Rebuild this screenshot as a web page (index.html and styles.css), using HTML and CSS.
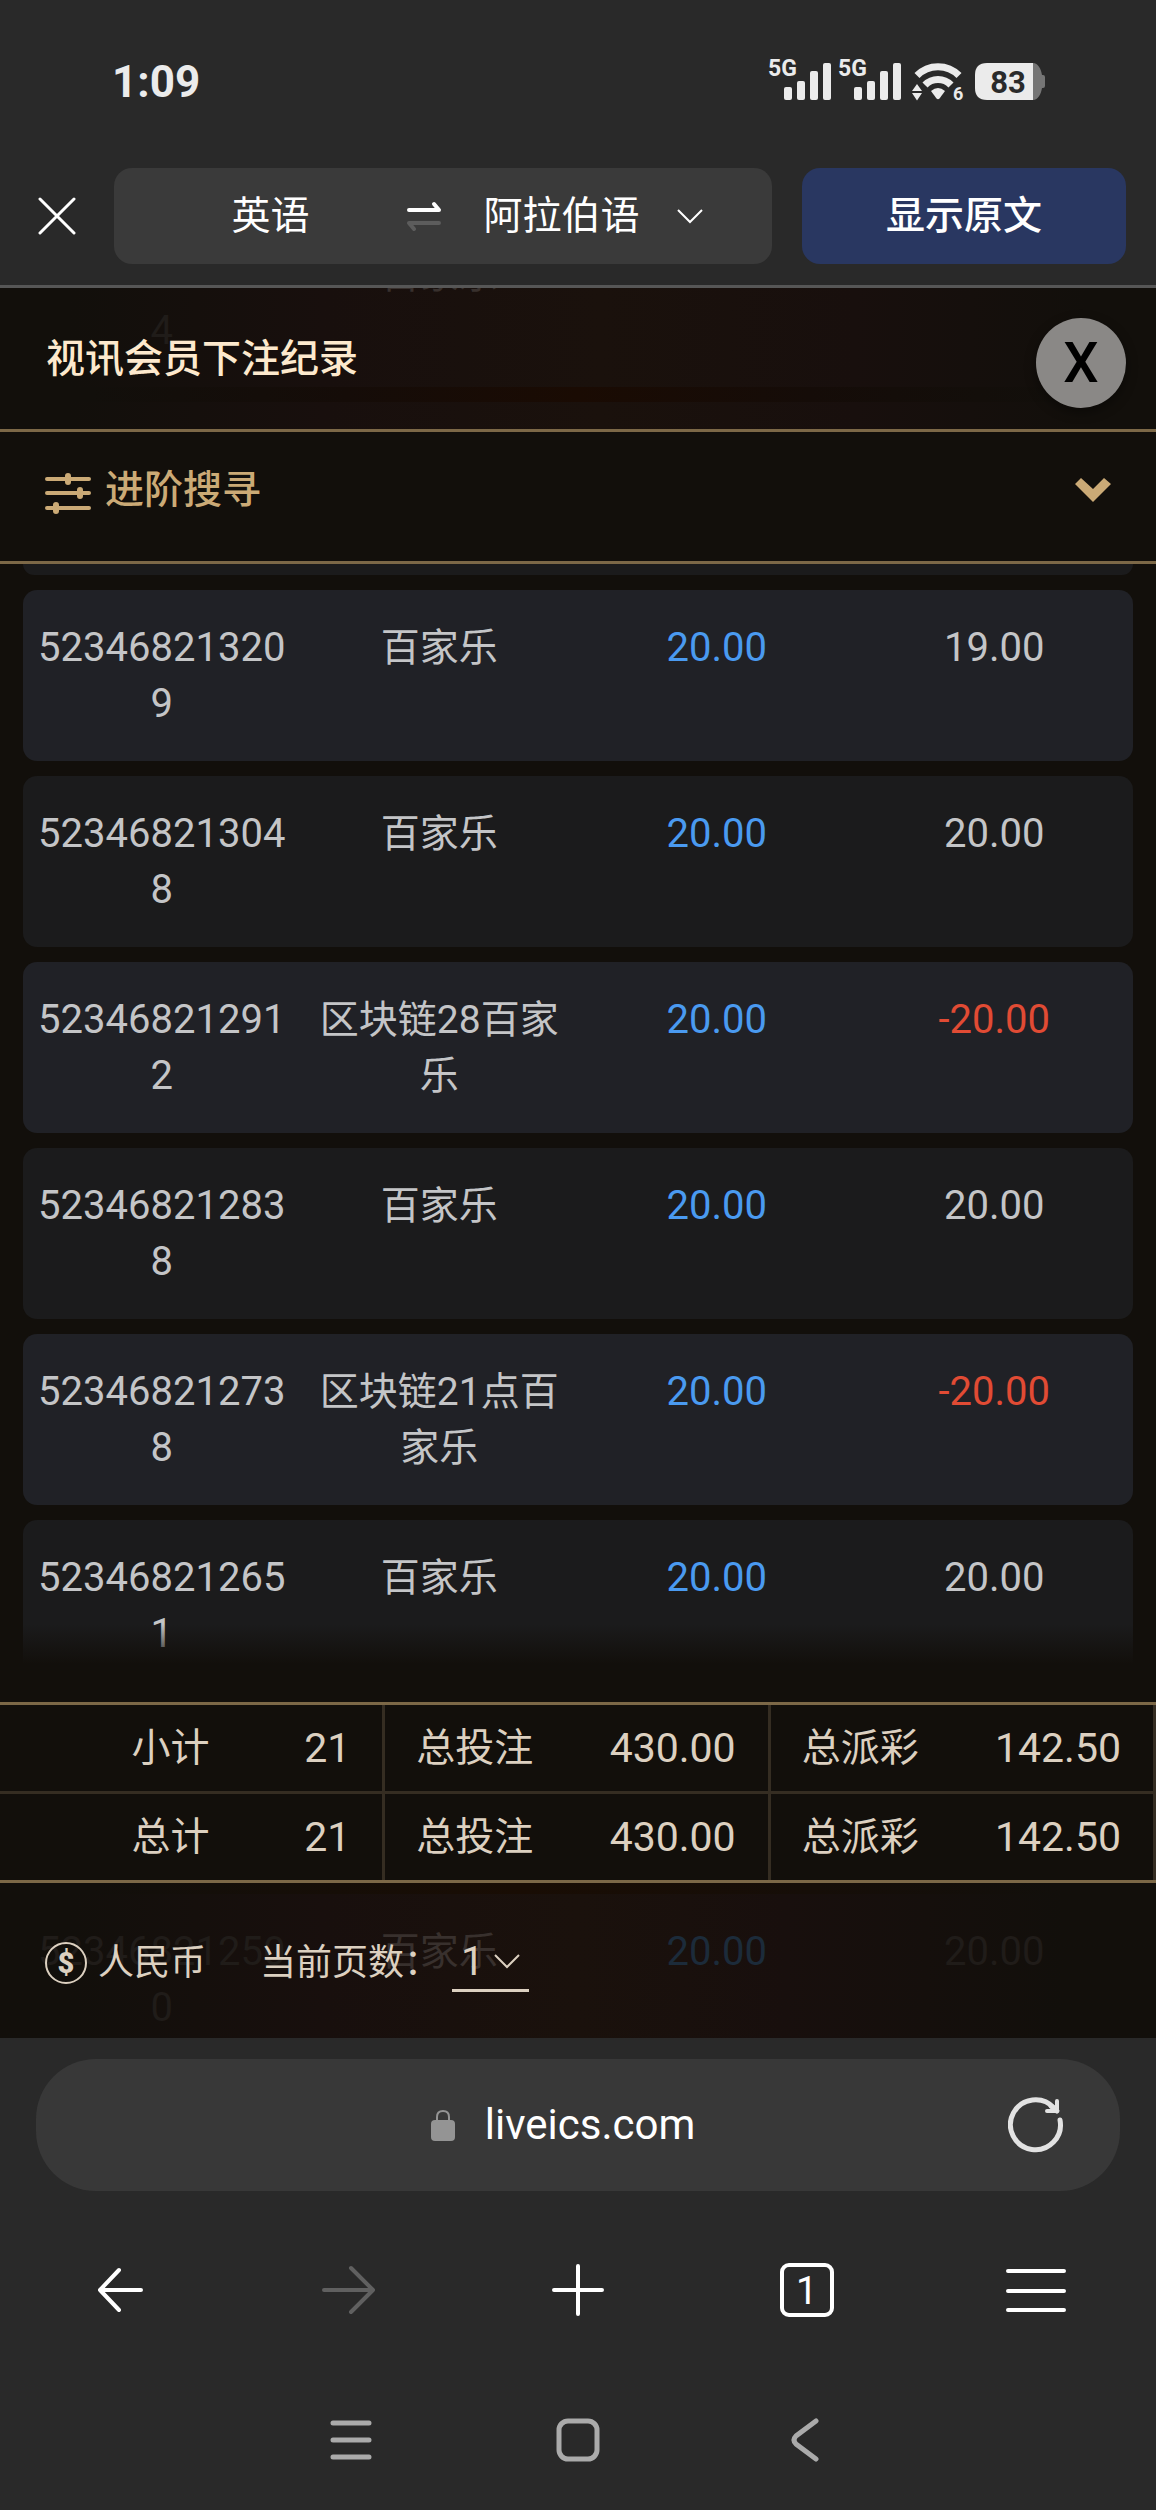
FILE: index.html
```html
<!DOCTYPE html>
<html lang="zh-CN">
<head>
    <meta charset="UTF-8">
    <meta name="viewport" content="width=device-width, initial-scale=1.0">
    <title>视讯会员下注纪录</title>
    <link rel="stylesheet" href="styles.css">
</head>
<body>
    <!-- Status bar -->
    <div class="status-bar">
        <span class="clock">1:09</span>
        <div class="status-icons">
            <svg class="signal" width="62" height="44" viewBox="0 0 62 44" fill="currentColor">
                <text x="-1" y="19" font-size="23" font-weight="700">5G</text>
                <rect x="15" y="30" width="8" height="13" rx="2"/>
                <rect x="28" y="24" width="8" height="19" rx="2"/>
                <rect x="41" y="14" width="8" height="29" rx="2"/>
                <rect x="54" y="6" width="8" height="37" rx="2"/>
            </svg>
            <svg class="signal" width="62" height="44" viewBox="0 0 62 44" fill="currentColor">
                <text x="-1" y="19" font-size="23" font-weight="700">5G</text>
                <rect x="15" y="30" width="8" height="13" rx="2"/>
                <rect x="28" y="24" width="8" height="19" rx="2"/>
                <rect x="41" y="14" width="8" height="29" rx="2"/>
                <rect x="54" y="6" width="8" height="37" rx="2"/>
            </svg>
            <svg class="wifi" width="54" height="44" viewBox="0 0 54 44" fill="currentColor">
                <path d="M6 18.5A29.4 29.4 0 0 1 48 18.5" fill="none" stroke="currentColor" stroke-width="7"/>
                <path d="M14 28A18 18 0 0 1 40 28" fill="none" stroke="currentColor" stroke-width="7"/>
                <path d="M20 34Q27 28 34 34L28.500 41.500Q27 43 25.500 41.500Z"/>
                <path d="M6 27L11 34H1ZM1 36H11L6 43.500Z"/>
                <text x="42" y="43" font-size="18" font-weight="700">6</text>
            </svg>
            <svg width="70" height="44" viewBox="0 0 70 44">
                <path d="M57 6H58C63 6 66 12 67 18H68Q70 18 70 20V29Q70 31 68 31H67C66 37 63 43 58 43H57Z" fill="#757575"/>
                <path d="M12 6H58V43H12Q0 43 0 31V18Q0 6 12 6Z" fill="currentColor"/>
                <text x="33" y="36" font-size="31" font-weight="700" text-anchor="middle" fill="#2a2a2a">83</text>
            </svg>
        </div>
    </div>

    <!-- Translate bar -->
    <div class="translate-bar">
        <button class="icon-btn translate-close" type="button" aria-label="关闭翻译">
            <svg width="38" height="38" viewBox="0 0 38 38" fill="none" stroke="currentColor" stroke-width="3" stroke-linecap="round">
                <path d="M2 2L36 36M36 2L2 36"/>
            </svg>
        </button>
        <div class="languages">
            <button class="lang-from" type="button">英语</button>
            <button class="icon-btn" type="button" aria-label="交换语言">
                <svg width="36" height="30" viewBox="0 0 36 30" fill="none" stroke-width="4" stroke-linecap="round" stroke-linejoin="round">
                    <path d="M3 9H33L28 3" stroke="#fff"/>
                    <path d="M33 22H3L8 28" stroke="#5c5c5c"/>
                </svg>
            </button>
            <label class="lang-to">
                <select aria-label="目标语言">
                    <option>阿拉伯语</option>
                </select>
                <svg width="26" height="16" viewBox="0 0 26 16" fill="none" stroke="currentColor" stroke-width="2">
                    <path d="M1 2L13 14L25 2"/>
                </svg>
            </label>
        </div>
        <button class="show-original" type="button">显示原文</button>
    </div>

    <main class="record">
        <header class="record-header">
            <div class="ghost-row ghost-top" aria-hidden="true">
                <span>&nbsp;<br>4</span>
                <span class="ghost-name">百家乐</span>
            </div>
            <h1>视讯会员下注纪录</h1>
            <button class="close-btn" type="button" aria-label="关闭">X</button>
        </header>

        <button class="search-toggle" type="button">
            <svg width="48" height="50" viewBox="0 0 48 50" fill="none" stroke="currentColor" stroke-linecap="round">
                <path d="M3 14H45M3 28H45M3 43H45" stroke-width="4"/>
                <path d="M24 11V17M36 25V31M12 40V46" stroke-width="6"/>
            </svg>
            <span>进阶搜寻</span>
            <svg class="toggle-arrow" width="36" height="24" viewBox="0 0 36 24" fill="currentColor">
                <path d="M6 0L18 11L29 0L36 6L18 24L0 6Z"/>
            </svg>
        </button>

        <div class="list">
            <div class="row-tail"></div>
            <table class="bets">
                <tbody>
                    <tr>
                        <td>523468213209</td>
                        <td class="game">百家乐</td>
                        <td class="stake">20.00</td>
                        <td>19.00</td>
                    </tr>
                    <tr>
                        <td>523468213048</td>
                        <td class="game">百家乐</td>
                        <td class="stake">20.00</td>
                        <td>20.00</td>
                    </tr>
                    <tr>
                        <td>523468212912</td>
                        <td class="game">区块链28百家乐</td>
                        <td class="stake">20.00</td>
                        <td class="loss">-20.00</td>
                    </tr>
                    <tr>
                        <td>523468212838</td>
                        <td class="game">百家乐</td>
                        <td class="stake">20.00</td>
                        <td>20.00</td>
                    </tr>
                    <tr>
                        <td>523468212738</td>
                        <td class="game">区块链21点百家乐</td>
                        <td class="stake">20.00</td>
                        <td class="loss">-20.00</td>
                    </tr>
                    <tr>
                        <td>523468212651</td>
                        <td class="game">百家乐</td>
                        <td class="stake">20.00</td>
                        <td>20.00</td>
                    </tr>
                </tbody>
            </table>
        </div>

        <table class="summary">
            <tbody>
                <tr>
                    <th class="total-label" scope="row">小计</th>
                    <td>21</td>
                    <th>总投注</th>
                    <td>430.00</td>
                    <th>总派彩</th>
                    <td>142.50</td>
                </tr>
                <tr>
                    <th class="total-label" scope="row">总计</th>
                    <td>21</td>
                    <th>总投注</th>
                    <td>430.00</td>
                    <th>总派彩</th>
                    <td>142.50</td>
                </tr>
            </tbody>
        </table>

        <footer class="record-footer">
            <div class="ghost-row ghost-bottom" aria-hidden="true">
                <span>523468212500</span>
                <span class="ghost-name">百家乐</span>
                <span class="ghost-stake">20.00</span>
                <span>20.00</span>
            </div>
            <div class="currency">
                <svg width="42" height="42" viewBox="0 0 42 42" fill="currentColor">
                    <circle cx="21" cy="21" r="20" fill="none" stroke="currentColor" stroke-width="2"/>
                    <text x="21" y="31" font-size="29" font-weight="900" text-anchor="middle">$</text>
                </svg>
                <span>人民币</span>
            </div>
            <label for="page">当前页数：</label>
            <div class="page-select">
                <select id="page">
                    <option>1</option>
                </select>
                <svg width="26" height="15" viewBox="0 0 26 15" fill="none" stroke="currentColor" stroke-width="2">
                    <path d="M1 1L13 13L25 1"/>
                </svg>
            </div>
        </footer>
    </main>

    <!-- Browser controls -->
    <div class="browser">
        <div class="address-bar">
            <a class="address" href="#">
                <svg width="24" height="31" viewBox="0 0 24 31" fill="#949494">
                    <path d="M6 12V7Q6 1 12 1T18 7V12" fill="none" stroke="#949494" stroke-width="2"/>
                    <rect y="10" width="24" height="21" rx="4"/>
                </svg>
                <span>liveics.com</span>
            </a>
            <button class="icon-btn reload" type="button" aria-label="刷新">
                <svg width="56" height="56" viewBox="0 0 56 56" fill="none" stroke="#e2e2e2" stroke-linecap="round" stroke-linejoin="round">
                    <path d="M52 23A25 25 0 1 1 46 11" stroke-width="5"/>
                    <path d="M49 4V14H39" stroke-width="4"/>
                    <path d="M43 9L49 14" stroke-width="5"/>
                </svg>
            </button>
        </div>
        <nav class="browser-nav">
            <button class="icon-btn" type="button" aria-label="后退">
                <svg width="46" height="46" viewBox="0 0 46 46" fill="none" stroke="currentColor" stroke-width="4" stroke-linecap="round" stroke-linejoin="round">
                    <path d="M44 23H3M22 3L3 23L22 43"/>
                </svg>
            </button>
            <button class="icon-btn forward" type="button" aria-label="前进">
                <svg width="54" height="50" viewBox="0 0 54 50" fill="none" stroke="currentColor" stroke-width="4" stroke-linecap="round" stroke-linejoin="round">
                    <path d="M2 25H51M29 3L51 25L29 47"/>
                </svg>
            </button>
            <button class="icon-btn" type="button" aria-label="新标签页">
                <svg width="52" height="52" viewBox="0 0 52 52" fill="none" stroke="currentColor" stroke-width="4" stroke-linecap="round">
                    <path d="M26 2V50M2 26H50"/>
                </svg>
            </button>
            <button class="icon-btn" type="button" aria-label="标签页">
                <span class="tab-count">1</span>
            </button>
            <button class="icon-btn" type="button" aria-label="菜单">
                <svg width="60" height="46" viewBox="0 0 60 46" fill="none" stroke="currentColor" stroke-width="4" stroke-linecap="round">
                    <path d="M2 4H58M2 24H58M2 43H58"/>
                </svg>
            </button>
        </nav>
        <nav class="system-nav">
            <button class="icon-btn" type="button" aria-label="最近任务">
                <svg width="42" height="42" viewBox="0 0 42 42" fill="none" stroke="currentColor" stroke-width="5" stroke-linecap="round">
                    <path d="M3 4H39M3 21H39M3 38H39"/>
                </svg>
            </button>
            <button class="icon-btn" type="button" aria-label="主屏幕">
                <svg width="44" height="44" viewBox="0 0 44 44" fill="none" stroke="currentColor" stroke-width="5">
                    <rect x="3" y="3" width="38" height="38" rx="9"/>
                </svg>
            </button>
            <button class="icon-btn" type="button" aria-label="返回">
                <svg width="28" height="46" viewBox="0 0 28 46" fill="none" stroke="currentColor" stroke-width="5" stroke-linecap="round">
                    <path d="M25 4L5 19Q1 23 5 27L25 42"/>
                </svg>
            </button>
        </nav>
    </div>
</body>
</html>
```

FILE: styles.css
```css
* {
    margin: 0;
    padding: 0;
    box-sizing: border-box;
}

body {
    display: flex;
    flex-direction: column;
    height: 100vh;
    overflow: hidden;
    background: #292929;
    color: #fff;
    font-family: Roboto, "Noto Sans CJK SC", sans-serif;
    font-size: 39px;
    line-height: 56px;
}

button,
select {
    border: none;
    background: none;
    color: inherit;
    font: inherit;
    appearance: none;
    cursor: pointer;
}

svg {
    display: block;
    flex-shrink: 0;
}

.icon-btn {
    display: flex;
    align-items: center;
    justify-content: center;
}

/* Status bar */
.status-bar {
    display: flex;
    align-items: flex-end;
    justify-content: space-between;
    height: 168px;
    padding: 0 111px 60px 112px;
    color: #ebebeb;
}

.clock {
    font-size: 44px;
    font-weight: 700;
    line-height: 52px;
}

.status-icons {
    display: flex;
    gap: 8px;
    padding-bottom: 7px;
}

.signal {
    overflow: visible;
}

.wifi {
    margin: 0 2px;
}

/* Translate bar */
.translate-bar {
    display: flex;
    height: 120px;
    padding: 0 30px 21px 0;
    border-bottom: 3px solid #565656;
}

.translate-close {
    width: 114px;
}

.languages {
    display: flex;
    flex: 1;
    align-items: center;
    justify-content: center;
    margin-right: 30px;
    padding-left: 48px;
    border-radius: 18px;
    background: #3a3a3a;
}

.lang-from {
    margin-right: 96px;
}

.lang-to {
    display: flex;
    align-items: center;
    gap: 36px;
    margin-left: 42px;
}

.show-original {
    width: 324px;
    border-radius: 18px;
    background: #293761;
    font-weight: 500;
}

/* Record page */
.record {
    display: flex;
    flex: 1;
    flex-direction: column;
    min-height: 0;
    background: #120f0b;
}

.record-header {
    position: relative;
    display: flex;
    align-items: center;
    justify-content: space-between;
    height: 144px;
    padding: 0 30px 0 46px;
    border-bottom: 3px solid #7c6847;
    background:
        linear-gradient(90deg, #120f0b 8%, #150c08 30%, #1a0b03 50%, #150c08 70%, #120f0b 92%) 0 99px / 100% 15px no-repeat,
        linear-gradient(90deg, #120f0b 6%, #180f0d 28%, #1a110c 52%, #180f0d 74%, #120f0b 94%);
    overflow: hidden;
}

.record-header h1 {
    z-index: 1;
    color: #fde9cd;
    font-size: 39px;
    font-weight: 500;
}

.close-btn {
    z-index: 1;
    width: 90px;
    height: 90px;
    margin-top: 8px;
    border-radius: 50%;
    background: #8a8886;
    box-shadow: 0 4px 12px rgba(0, 0, 0, 0.4);
    color: #000;
    font-size: 56px;
    font-weight: 500;
    line-height: 90px;
}

/* Row text showing through the header and the footer */
.ghost-row {
    position: absolute;
    left: 23px;
    right: 23px;
    display: grid;
    grid-template-columns: repeat(4, 1fr);
    color: #201c19;
    font-size: 40px;
    text-align: center;
    word-break: break-all;
}

.ghost-row span {
    padding: 0 12px;
}

.ghost-top {
    top: -41px;
}

.ghost-bottom {
    top: 41px;
}

.ghost-row .ghost-name {
    color: #38302d;
    font-size: 39px;
}

.ghost-row .ghost-stake {
    color: #1c2b3a;
}

.search-toggle {
    display: flex;
    align-items: center;
    height: 132px;
    padding: 0 45px 14px 44px;
    border-bottom: 3px solid #7c6847;
    color: #cbaa76;
    font-weight: 500;
    gap: 13px;
}

.toggle-arrow {
    margin-left: auto;
}

/* Bet list */
.list {
    position: relative;
    flex: 1;
    min-height: 0;
    padding: 0 23px;
    overflow: hidden;
}

/* Fade at the bottom of the list */
.list::after {
    content: "";
    position: absolute;
    left: 0;
    right: 0;
    bottom: 0;
    height: 78px;
    background: linear-gradient(transparent, #120f0b 52%);
}

.row-tail {
    height: 11px;
    border-radius: 0 0 14px 14px;
    background: #1b1b1c;
}

.bets {
    width: 100%;
    border-collapse: separate;
    border-spacing: 0 15px;
    table-layout: fixed;
    color: #c4c5c7;
    font-size: 40px;
}

.bets tr {
    background: #1b1b1c;
}

.bets tr:nth-child(odd) {
    background: #202126;
}

.bets td {
    height: 171px;
    padding: 30px 12px 28px;
    text-align: center;
    vertical-align: top;
    word-break: break-all;
}

.bets td:first-child {
    border-radius: 14px 0 0 14px;
}

.bets td:last-child {
    border-radius: 0 14px 14px 0;
}

.bets .game {
    font-size: 39px;
}

.bets .stake {
    color: #4a9af0;
}

.bets .loss {
    color: #e14b34;
}

/* Totals */
.summary {
    width: 100%;
    border-top: 3px solid #7c6847;
    border-bottom: 3px solid #7c6847;
    border-collapse: separate;
    border-spacing: 0;
    table-layout: fixed;
    color: #dcd0c0;
}

.summary th,
.summary td {
    height: 86px;
    font-weight: 400;
}

.summary tr:first-child th,
.summary tr:first-child td {
    height: 89px;
    border-bottom: 3px solid #352d22;
}

.summary th {
    width: 19%;
    padding-left: 31px;
    text-align: left;
}

.summary .total-label {
    padding: 0 10px 0 0;
    text-align: right;
}

.summary td {
    padding-right: 32px;
    border-right: 3px solid #352d22;
    font-size: 41px;
    text-align: right;
}

/* Footer */
.record-footer {
    position: relative;
    display: flex;
    align-items: center;
    height: 155px;
    padding: 4px 45px 0;
    background:
        linear-gradient(90deg, #120f0b 8%, #190d04 45%, #160e08 70%, #120f0b 92%) 0 0 / 100% 11px no-repeat,
        linear-gradient(90deg, #120f0b 6%, #180f0d 28%, #1a110c 50%, #180f0d 68%, #120f0b 92%);
    color: #dcd0c0;
    font-size: 36px;
}

.currency,
.record-footer label,
.page-select {
    z-index: 1;
}

.currency {
    display: flex;
    align-items: center;
    gap: 11px;
    margin-right: 54px;
}

.page-select {
    display: flex;
    align-items: center;
    gap: 9px;
    margin-left: 12px;
    padding: 0 9px;
    border-bottom: 3px solid #dcd0c0;
    font-size: 41px;
}

/* Browser controls */
.browser {
    padding: 21px 0 45px;
}

.address-bar {
    position: relative;
    display: flex;
    align-items: center;
    justify-content: center;
    height: 132px;
    margin: 0 36px;
    border-radius: 60px;
    background: #383838;
}

.address {
    display: flex;
    align-items: center;
    gap: 30px;
    margin-right: 30px;
    color: #fff;
    font-size: 42px;
    text-decoration: none;
}

/* Sits over the right end of the pill */
.reload {
    position: absolute;
    right: 56px;
}

.browser-nav {
    display: grid;
    grid-template-columns: repeat(5, 1fr);
    align-items: center;
    height: 198px;
    padding: 0 6px;
}

.forward {
    color: #606060;
}

.tab-count {
    width: 54px;
    height: 54px;
    border: 4px solid #fff;
    border-radius: 9px;
    font-size: 38px;
    line-height: 48px;
    text-align: center;
}

.system-nav {
    display: grid;
    grid-template-columns: repeat(3, 1fr);
    align-items: center;
    height: 50px;
    margin-top: 26px;
    padding: 0 237px;
    color: #aaa;
}
```
